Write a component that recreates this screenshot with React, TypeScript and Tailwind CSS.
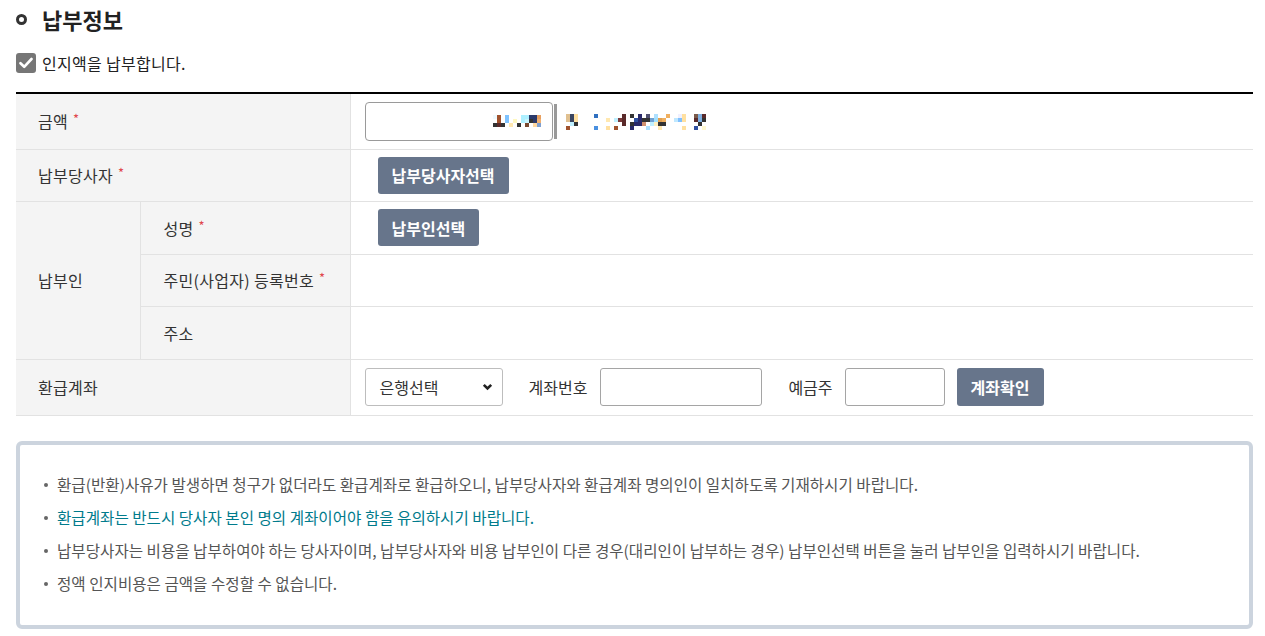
import React from "react";

type Cell = [number, number, string];

const leftCells: Cell[] = [
  [0, 0, "#eefaff"], [1, 0, "#a0522d"], [3, 0, "#7fc3ff"], [7, 0, "#aef0ff"], [8, 0, "#aef0ff"], [9, 0, "#2b3a6b"], [10, 0, "#2b3a6b"], [11, 0, "#e8a060"],
  [1, 1, "#a0522d"], [3, 1, "#7fc3ff"], [5, 1, "#fff8c0"], [7, 1, "#aef0ff"], [8, 1, "#c8f4ff"], [9, 1, "#333333"], [10, 1, "#2b3a6b"], [11, 1, "#f0b070"],
  [0, 2, "#333333"], [1, 2, "#5a2a2a"], [2, 2, "#333333"], [4, 2, "#ffe8b0"], [6, 2, "#333333"], [8, 2, "#7a4a30"], [10, 2, "#ffd8a0"], [11, 2, "#80a0d0"],
];

const rightCells: Cell[] = [
  [0, 0, "#e0c090"], [1, 0, "#3a4560"], [2, 0, "#ffe0a0"], [7, 0, "#3070c0"], [14, 0, "#5a2a2a"], [16, 0, "#333333"], [18, 0, "#2a2a6a"], [20, 0, "#505070"], [22, 0, "#aee0ff"], [25, 0, "#f0b060"], [28, 0, "#f0f0ff"], [29, 0, "#ffe0a0"], [32, 0, "#7a5a4a"], [33, 0, "#80b0e0"], [34, 0, "#5a2a2a"],
  [0, 1, "#e0c090"], [1, 1, "#3a4560"], [2, 1, "#ffe0a0"], [10, 1, "#ffe8b0"], [12, 1, "#c0f0ff"], [13, 1, "#7a3a3a"], [14, 1, "#5a2a2a"], [17, 1, "#3050a0"], [18, 1, "#2a2a6a"], [19, 1, "#333333"], [20, 1, "#333333"], [21, 1, "#70a0d0"], [22, 1, "#a0e0ff"], [23, 1, "#e0a050"], [24, 1, "#f0b060"], [27, 1, "#c0e8ff"], [28, 1, "#80c0ff"], [29, 1, "#ffe0a0"], [32, 1, "#5a2a2a"], [33, 1, "#80b0e0"], [34, 1, "#333333"],
  [1, 2, "#c0f0ff"], [2, 2, "#333333"], [14, 2, "#5a2a2a"], [16, 2, "#333333"], [17, 2, "#2a2a6a"], [18, 2, "#2a2a6a"], [19, 2, "#d09070"], [21, 2, "#c0f0ff"], [22, 2, "#fff0c0"], [23, 2, "#333333"], [24, 2, "#333333"], [33, 2, "#333333"],
  [0, 3, "#a0522d"], [7, 3, "#4a90e0"], [10, 3, "#ffe0a0"], [12, 3, "#a0522d"], [16, 3, "#2a2a6a"], [20, 3, "#aee0ff"], [23, 3, "#ffe8b0"], [29, 3, "#ffe0a0"], [32, 3, "#3050a0"], [34, 3, "#fff8d0"],
];

function Mosaic({ cells, cols, rows }: { cells: Cell[]; cols: number; rows: number }) {
  return (
    <svg width={cols * 4} height={rows * 4} viewBox={`0 0 ${cols * 4} ${rows * 4}`} shapeRendering="crispEdges">
      {cells.map(([c, r, col], i) => (
        <rect key={i} x={c * 4} y={r * 4} width={4} height={4} fill={col} />
      ))}
    </svg>
  );
}

function Req() {
  return <span className="relative top-[-4px] ml-[5px] text-[13px] leading-none text-[#e0474c]">*</span>;
}

function Btn({ children, className = "" }: { children: React.ReactNode; className?: string }) {
  return (
    <button className={`h-[37px] rounded-[3px] bg-[#67758b] px-[14px] text-[16px] font-bold text-white ${className}`}>
      {children}
    </button>
  );
}

const th = "bg-[#f4f4f4] text-left font-normal align-middle border-b border-[#e2e2e2] tracking-[0.3px]";

export default function App() {
  return (
    <div className="min-h-[636px] bg-white pl-4 pr-3 font-['Noto_Sans_CJK_KR',sans-serif] text-[#333]">
      <div className="flex h-[38px] items-center">
        <span className="h-[11px] w-[11px] rounded-full border-[3px] border-[#333]" />
        <h2 className="ml-[15px] text-[22px] font-bold text-[#222]">납부정보</h2>
      </div>
      <label className="mt-[15px] flex h-[20px] items-center">
        <span className="flex h-[20px] w-[20px] items-center justify-center rounded-[3px] bg-[#767676]">
          <svg width="14" height="12" viewBox="0 0 14 12">
            <path d="M1.5 6.2 L5.2 9.8 L12.5 2" fill="none" stroke="white" strokeWidth="2.6" strokeLinecap="round" strokeLinejoin="round" />
          </svg>
        </span>
        <span className="ml-[6px] text-[16px] tracking-[0.3px] text-[#222]">인지액을 납부합니다.</span>
      </label>

      <table className="mt-[19px] w-full border-collapse border-t-2 border-t-black text-[16px]">
        <colgroup>
          <col className="w-[124px]" />
          <col className="w-[210px]" />
          <col />
        </colgroup>
        <tbody>
          <tr className="h-[56px]">
            <th colSpan={2} className={`${th} pl-[22px]`}>
              금액<Req />
            </th>
            <td className="border-b border-l border-[#e2e2e2] pl-[14px]">
              <div className="flex items-center">
                <div className="flex h-[39px] w-[188px] items-center justify-end rounded-[4px] border border-[#9a9a9a] pr-[11px]">
                  <Mosaic cells={leftCells} cols={12} rows={3} />
                </div>
                <div className="ml-[1px] h-[35px] w-[3px] bg-[#999]" />
                <div className="ml-[9px] mt-[1px]">
                  <Mosaic cells={rightCells} cols={36} rows={4} />
                </div>
              </div>
            </td>
          </tr>
          <tr className="h-[52px]">
            <th colSpan={2} className={`${th} pl-[22px]`}>
              납부당사자<Req />
            </th>
            <td className="border-b border-l border-[#e2e2e2] pl-[27px]">
              <Btn>납부당사자선택</Btn>
            </td>
          </tr>
          <tr className="h-[53px]">
            <th rowSpan={3} className={`${th} border-r pl-[22px]`}>
              납부인
            </th>
            <th className={`${th} pl-[23px]`}>
              성명<Req />
            </th>
            <td className="border-b border-l border-[#e2e2e2] pl-[27px]">
              <Btn>납부인선택</Btn>
            </td>
          </tr>
          <tr className="h-[52px]">
            <th className={`${th} pl-[23px]`}>
              주민(사업자) 등록번호<Req />
            </th>
            <td className="border-b border-l border-[#e2e2e2]" />
          </tr>
          <tr className="h-[53px]">
            <th className={`${th} pl-[23px]`}>주소</th>
            <td className="border-b border-l border-[#e2e2e2]" />
          </tr>
          <tr className="h-[56px]">
            <th colSpan={2} className={`${th} pl-[22px]`}>
              환급계좌
            </th>
            <td className="border-b border-l border-[#e2e2e2] pl-[14px]">
              <div className="flex items-center">
                <div className="flex h-[38px] w-[138px] items-center justify-between rounded-[3px] border border-[#bdbdbd] pl-[14px] pr-[9px]">
                  <span>은행선택</span>
                  <svg width="11" height="8" viewBox="0 0 11 8">
                    <path d="M1.8 1.8 L5.5 5.5 L9.2 1.8" fill="none" stroke="#222" strokeWidth="2.6" />
                  </svg>
                </div>
                <span className="ml-[26px]">계좌번호</span>
                <div className="ml-[13px] h-[38px] w-[162px] rounded-[3px] border border-[#a5a5a5]" />
                <span className="ml-[26px]">예금주</span>
                <div className="ml-[12px] h-[38px] w-[100px] rounded-[3px] border border-[#a5a5a5]" />
                <Btn className="ml-[12px] !h-[38px] w-[87px] !px-0">계좌확인</Btn>
              </div>
            </td>
          </tr>
        </tbody>
      </table>

      <div className="mt-[25px] h-[188px] rounded-[6px] border-4 border-[#ccd4de] pl-[24px] pt-[30px] text-[15.6px] text-[#555]">
        <ul className="flex flex-col gap-[13px]">
          {[
            ["환급(반환)사유가 발생하면 청구가 없더라도 환급계좌로 환급하오니, 납부당사자와 환급계좌 명의인이 일치하도록 기재하시기 바랍니다.", false],
            ["환급계좌는 반드시 당사자 본인 명의 계좌이어야 함을 유의하시기 바랍니다.", true],
            ["납부당사자는 비용을 납부하여야 하는 당사자이며, 납부당사자와 비용 납부인이 다른 경우(대리인이 납부하는 경우) 납부인선택 버튼을 눌러 납부인을 입력하시기 바랍니다.", false],
            ["정액 인지비용은 금액을 수정할 수 없습니다.", false],
          ].map(([t, hl], i) => (
            <li key={i} className="flex h-[20px] items-center">
              <span className="mr-[9px] h-[4px] w-[4px] rounded-full bg-[#666]" />
              <span className={hl ? "text-[#007b8c]" : ""}>{t as string}</span>
            </li>
          ))}
        </ul>
      </div>
    </div>
  );
}
